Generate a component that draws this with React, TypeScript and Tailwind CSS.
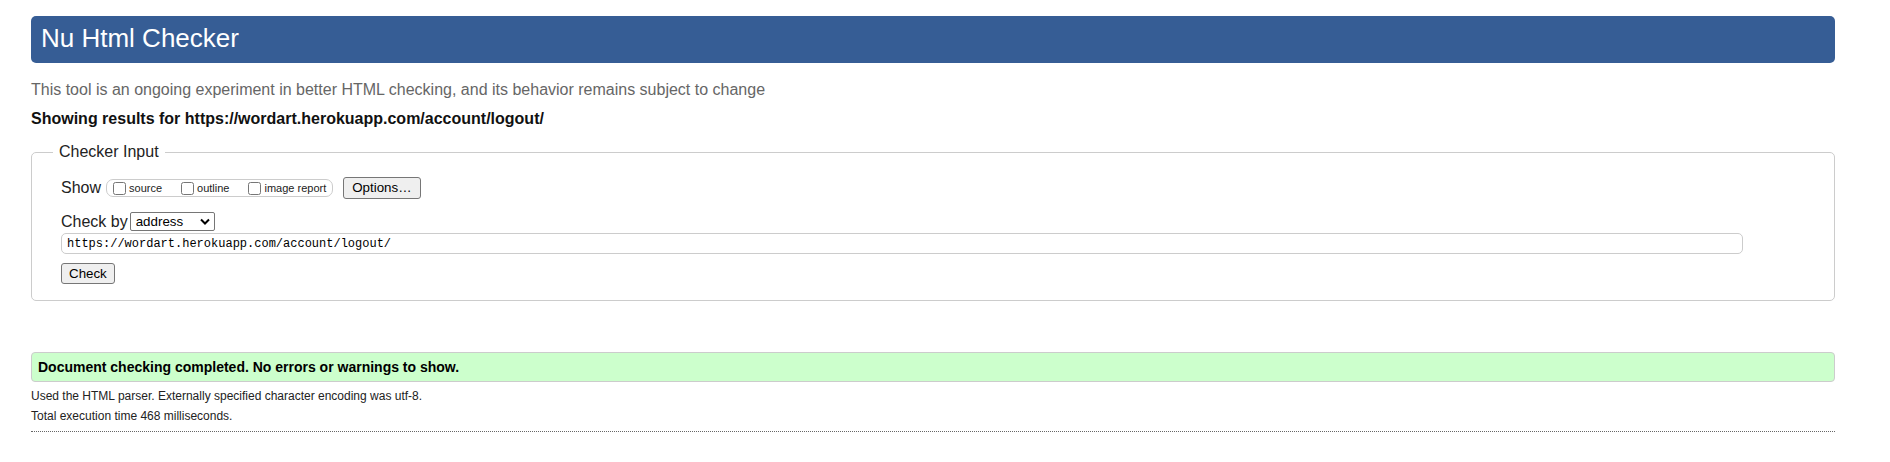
export default function App() {
  const options = ["source", "outline", "image report"];
  return (
    <div className="min-h-[462px] w-full bg-white font-['Liberation_Sans',Arial,sans-serif] text-[#222]">
      <div className="pl-[31px] pr-[55px] pt-[16px]">
        <header className="h-[47px] rounded-[5px] bg-[#365d95] pl-[10px] pt-[7px]">
          <h1 className="text-[26px] leading-[30px] text-white">Nu Html Checker</h1>
        </header>

        <p className="mt-[17px] text-[16px] leading-[20px] text-[#666]">
          This tool is an ongoing experiment in better HTML checking, and its behavior remains subject to change
        </p>
        <p className="mt-[9px] text-[16px] font-bold leading-[20px] text-[#111]">
          Showing results for https://wordart.herokuapp.com/account/logout/
        </p>

        <fieldset className="mt-[13px] rounded-[5px] border border-[#ccc] pb-[16px] pl-[21px] pr-[20px] pt-[15px]">
          <legend className="px-[6px] text-[16px] leading-[20px] text-[#222]">Checker Input</legend>
          <div className="pl-[8px]">
            <div className="flex h-[22px] items-center">
              <span className="text-[16px] leading-[20px]">Show</span>
              <div className="ml-[5px] flex h-[18px] items-center gap-[19px] rounded-[7px] border border-[#ccc] px-[6px]">
                {options.map((o) => (
                  <label key={o} className="flex items-center gap-[3px]">
                    <input type="checkbox" className="m-0 h-[13px] w-[13px]" />
                    <span className="text-[11px] leading-[13px]">{o}</span>
                  </label>
                ))}
              </div>
              <button className="ml-[10px] h-[22px] rounded-[3px] border border-[#767676] bg-[#efefef] px-[8px] text-[13.33px] leading-[16px] text-black">
                Options…
              </button>
            </div>

            <div className="mt-[13px] flex h-[19px] items-center">
              <span className="text-[16px] leading-[20px]">Check by</span>
              <div className="ml-[2px] flex h-[19px] w-[85px] items-center justify-between rounded-[2px] border border-[#767676] pl-[5px] pr-[4px]">
                <span className="text-[13.33px] leading-[16px] text-black">address</span>
                <svg width="10" height="7" viewBox="0 0 10 7">
                  <path d="M1 1.5 L5 5.5 L9 1.5" fill="none" stroke="#000" strokeWidth="2" />
                </svg>
              </div>
            </div>

            <div className="mt-[2px] flex h-[21px] w-[1682px] items-center rounded-[5px] border border-[#ccc] pl-[5px]">
              <span className="font-['Liberation_Mono',monospace] text-[12px] leading-[14px] text-black">
                https://wordart.herokuapp.com/account/logout/
              </span>
            </div>

            <button className="mt-[9px] block h-[21px] rounded-[3px] border border-[#767676] bg-[#efefef] px-[7px] text-[13.33px] leading-[16px] text-black">
              Check
            </button>
          </div>
        </fieldset>

        <div className="mt-[51px] flex h-[30px] items-center rounded-[4px] border border-[#ccc] bg-[#ccffcc] pl-[6px]">
          <span className="text-[14px] font-bold leading-[16px] text-black">
            Document checking completed. No errors or warnings to show.
          </span>
        </div>

        <p className="mt-[4px] text-[12px] leading-[20px] text-[#222]">
          Used the HTML parser. Externally specified character encoding was utf-8.
        </p>
        <p className="text-[12px] leading-[20px] text-[#222]">Total execution time 468 milliseconds.</p>
        <div className="mt-[5px] border-b border-dotted border-[#666]" />
      </div>
    </div>
  );
}
